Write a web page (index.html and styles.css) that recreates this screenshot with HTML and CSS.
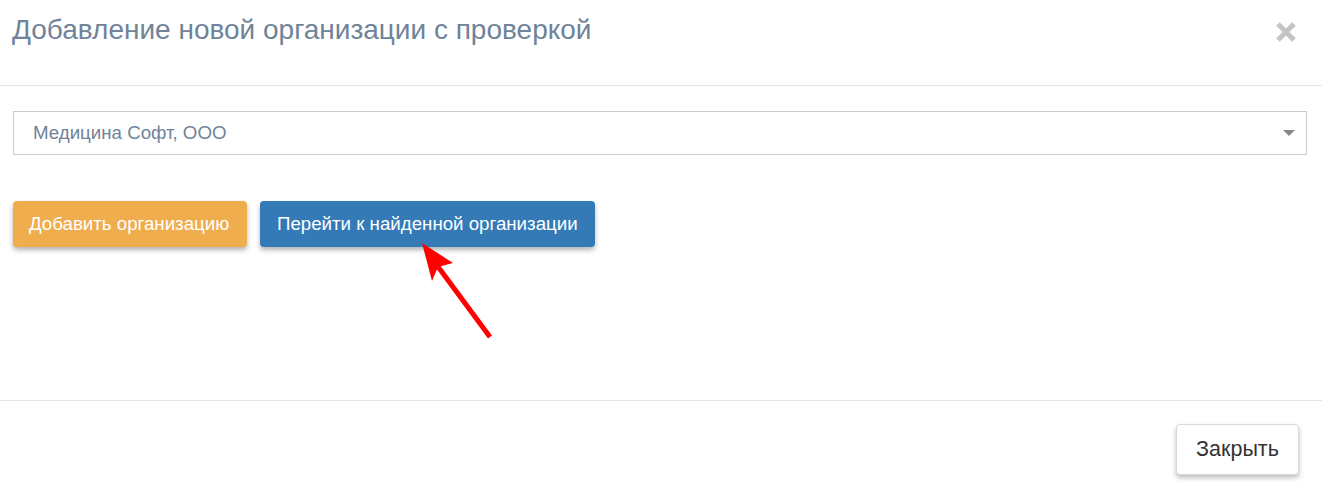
FILE: index.html
```html
<!DOCTYPE html>
<html lang="ru">
<head>
    <meta charset="UTF-8">
    <meta name="viewport" content="width=device-width, initial-scale=1.0">
    <title>Добавление новой организации</title>
    <link rel="stylesheet" href="styles.css">
</head>
<body>

<div class="modal">
    <!-- Заголовок -->
    <div class="modal-header">
        <h4 class="modal-title">Добавление новой организации с проверкой</h4>
        <button class="close" aria-label="Закрыть">
            <svg width="22" height="22" viewBox="0 0 22 22">
                <path d="M3 3 L19 19 M19 3 L3 19" stroke="#c4c4c4" stroke-width="5" stroke-linecap="butt"/>
            </svg>
        </button>
    </div>

    <!-- Тело -->
    <div class="modal-body">
        <div class="select">
            <span class="select-value">Медицина Софт, ООО</span>
            <span class="select-arrow"></span>
        </div>
        <div class="actions">
            <button class="btn btn-warning">Добавить организацию</button>
            <button class="btn btn-primary">Перейти к найденной организации</button>
        </div>
    </div>

    <!-- Подвал -->
    <div class="modal-footer">
        <button class="btn btn-default">Закрыть</button>
    </div>

    <!-- Стрелка-подсказка поверх -->
    <svg class="pointer" width="120" height="120" viewBox="0 0 120 120">
        <line x1="88" y1="105" x2="34" y2="32" stroke="#ff0000" stroke-width="5"/>
        <polygon points="20,11 51,31 36,35 30,49" fill="#ff0000"/>
    </svg>
</div>

</body>
</html>
```

FILE: styles.css
```css
body {
    margin: 0;
    padding: 0;
    background-color: #ffffff;
    font-family: "Liberation Sans", Arial, sans-serif;
}

.modal {
    position: relative;
    width: 1322px;
    height: 487px;
    overflow: hidden;
}

.modal-header {
    display: flex;
    justify-content: space-between;
    align-items: flex-start;
    height: 85px;
    padding: 0 25px 0 12px;
    border-bottom: 1px solid #e5e5e5;
}

.modal-title {
    margin: 15px 0 0;
    font-size: 28px;
    font-weight: normal;
    line-height: 30px;
    color: #6f8399;
}

.close {
    margin-top: 21px;
    padding: 0;
    border: none;
    background: none;
    line-height: 0;
    cursor: pointer;
}

.modal-body {
    height: 289px;
    padding: 25px 15px 0 13px;
}

.select {
    display: flex;
    align-items: center;
    justify-content: space-between;
    height: 42px;
    padding: 0 11px 0 19px;
    border: 1px solid #cccccc;
    color: #6f8399;
    font-size: 18.7px;
}

.select-arrow {
    width: 0;
    height: 0;
    border-style: solid;
    border-width: 6px 6px 0 6px;
    border-color: #888888 transparent transparent transparent;
}

.actions {
    display: flex;
    gap: 13px;
    margin-top: 46px;
}

.btn {
    font-family: "Liberation Sans", Arial, sans-serif;
    border-radius: 4px;
    cursor: pointer;
}

.btn-warning,
.btn-primary {
    height: 46px;
    padding: 0 16px;
    border: none;
    font-size: 18.7px;
    color: #ffffff;
    text-align: left;
    box-shadow: 0 3px 5px rgba(0, 0, 0, 0.3);
}

.btn-warning {
    width: 234px;
    background-color: #f0ad4e;
}

.btn-primary {
    width: 335px;
    padding-left: 17px;
    background-color: #337ab7;
}

.modal-footer {
    display: flex;
    justify-content: flex-end;
    padding: 23px 23px 0 0;
    border-top: 1px solid #e5e5e5;
}

.btn-default {
    width: 123px;
    height: 51px;
    border: 1px solid #d9d9d9;
    background-color: #ffffff;
    color: #333333;
    font-size: 21.5px;
    box-shadow: 0 3px 5px rgba(0, 0, 0, 0.25);
}

.pointer {
    position: absolute;
    left: 402px;
    top: 232px;
}
```
